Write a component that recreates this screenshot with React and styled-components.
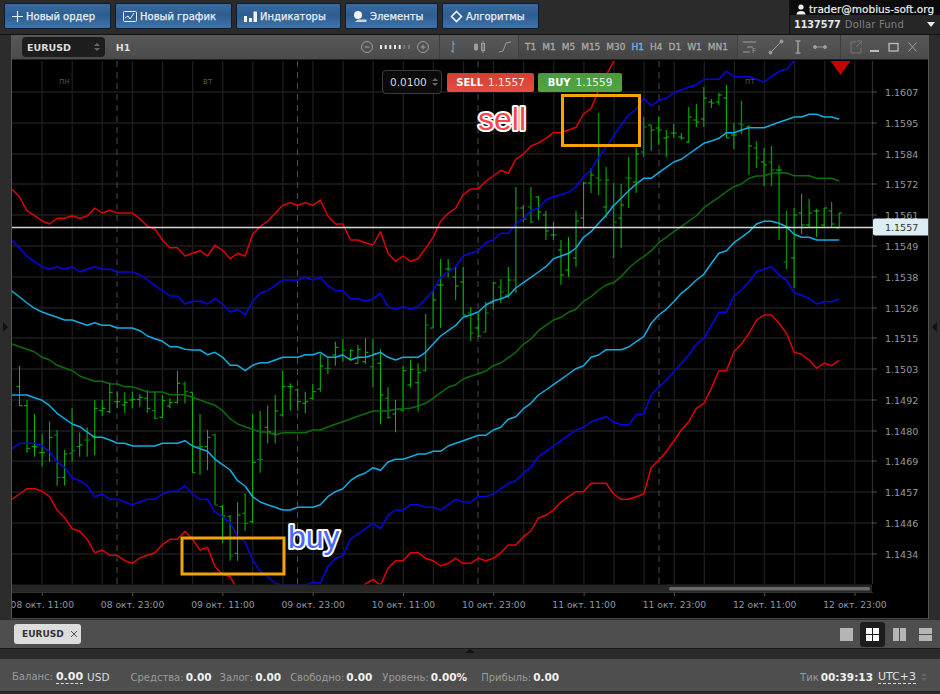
import React from 'react'
import styled, { createGlobalStyle } from 'styled-components'

const X = (k) => 12 + 7.52 * k

const LINES = {
  redTop: [189.3,197,210.7,215.7,221,224,218.3,218.3,215.7,218.3,216,208,213,210.3,213,213,213,218.7,226.3,229,240,247.7,247.7,256,253.3,250.7,256,245.3,250.3,258.7,253.3,256,234.3,226.7,221,213.3,205.3,202.7,205.3,202.7,205.3,200,216,224,224,240,240,242.7,245,231.7,253.3,261.3,256,261.3,258.7,248.3,237.3,221.3,213.3,208,194.7,189,189,181.3,176,170.3,173.3,159.3,154,146,143,138.3,132.7,132.7,130,127.3,114,108.7,90,75,61.7,48],
  blueTop: [240.3,248.3,256.3,261.7,266.7,269.3,266.7,269.3,266.7,272,269.3,266.7,269.3,269.3,272,272,272,274.7,280,285.3,290.7,296,296,304,301.3,301.3,304,298.7,304,312,309.3,314.7,301.3,293.3,290.7,285.3,280,280,280,277.3,280,277.3,285.7,290.7,290.7,298.7,298.7,301.3,298.7,293.3,306.7,309.3,306.7,309.3,306.7,298.7,290.7,277.3,272,266.7,256,253.3,250.7,242.7,240,233.3,233.3,224,218.7,210.7,208,200,196.7,194.7,192,186.7,176.7,170,157.3,147.3,136,125,115,109.3,98.3,106,100.7,98.3,92.7,90,87.3,84.7,79.3,79.3,79.3,71.3,76.7,76.7,76.7,79.3,82,76.7,71.3,69.3,61,50],
  cyanTop: [291,297,303,308.3,312,314.7,317.3,320,320,322.7,325.3,322.7,325.3,325.3,328,328,328,330.7,336,338.7,341.3,346.7,346.7,349.3,350,350,354.7,352.3,357.3,365.3,365.3,370.7,365.3,362.7,362.7,360,357.3,357.3,357.3,354.7,354.7,352.3,357.3,357.3,355,360,357.3,357.3,355,352.3,357.3,360,357.3,357.3,357.3,352.3,344,336,330.7,325.3,317.3,314.7,312,305,301,298.7,296,288,282.7,277.3,272,266.7,258.7,256,253.3,248,237.3,231.7,223.3,215.3,205.7,198.3,190.7,184,178.3,178.3,172.7,167.3,162,159.3,154,148.7,143.3,141,138.3,132.7,132.7,130,127.7,127.7,127.7,125,122.3,119.7,117,117,114.3,114.3,117,117,119.3],
  green: [344,346.7,349.3,352,357.3,360,365.3,368,370.7,376,378.7,381.3,381.3,384,384,386.7,386.7,389.3,392,392,392,394.7,394.7,394.7,397.3,400,402.7,405.3,410.7,418.7,424,426.7,429.3,432,432,435,432.7,432.7,432.7,432.7,430,430,427,424.3,421.7,419,416.3,413.7,411,411,411,409.3,408.7,408.3,406,403.3,398.3,392.7,387.3,384.7,379,376.3,373.7,371,365.7,363,357.7,352.3,344.3,339,330.7,325.3,320,317.3,312.3,309.3,301.3,296.7,290,285,282.7,276.7,268.3,261.7,256.7,250.7,242.7,237.3,231.7,226.7,221,216,207.7,202.3,197.3,191.7,186.7,184,178.3,176,175.7,173.3,172.7,173,175.7,175.7,175.7,178.3,178.3,178.3,181],
  cyanLow: [395,395,395,397.7,400.3,405.7,413.3,418.7,424,426.7,432,437.3,437.3,440,443.3,443.3,446,446,446,446,443.3,443.3,443.3,440.7,446,448.7,451.3,459.3,464.7,470,480.7,486,496.7,502,504.7,507.3,510,510,507.3,507.3,507.3,504.7,496.7,491.7,488.7,480.7,475.7,473,467.7,470.3,462,459.3,459.3,456.7,454,454,451.3,451.3,446,443.3,440.7,438,435.3,435.3,430,427.3,419.3,416.7,408.7,403.3,395,390,384.7,379.3,374,368.7,365.7,357.3,355,349.7,349.7,349.7,347,341.7,336.7,323.3,315,309.3,301.7,293.3,287.3,280,274.3,263.3,253.3,250.7,242.7,237.3,231.7,224,221.3,221.3,223.3,226.7,234.3,237.3,237.3,240,240,240,240],
  blueLow: [448.7,443.3,443.3,443.3,446,451.7,461.7,467.3,477.7,480.7,485.7,496.7,494,499.3,499.3,502,504.7,502,499.3,499.3,494,491.3,491.3,485.7,494,499.3,499.3,512,516.7,522.7,536.7,542,560,571.3,576.7,583.3,585,585,585,585,582.3,583.3,566.7,558.3,555.7,539.3,534,528.7,523.3,528.7,515.3,510,510,504.7,504.7,507.3,507.3,510,504.7,499.3,502,502,496.7,496.7,494,488.7,483.3,480.7,472.7,467.3,456.7,451.3,446,440.7,435.3,430,427.3,422,419.3,416.7,422,424.7,424.7,415,414,395,387.3,380,371.7,363.3,355,344,338.7,325.3,312.3,312.3,296,290,281.7,271.7,269,266.7,275,280,292.7,295.3,298.3,304,301.7,301.7,299],
  redLow: [499.3,494,488.7,488.7,491.3,496.7,510,517.7,528.7,531.3,539.3,552.7,550,555.3,555.3,560.7,563.3,558,555.3,552.7,544.7,539.3,539.3,531.3,539.3,550,547.3,566.7,574.3,576.7,590,600,600,600,600,600,600,600,600,600,600,600,600,600,600,600,590,584,579.3,585,568.3,560.7,560.7,552.7,552.7,558.3,560.7,566,563.3,558.3,563.3,563.3,558.3,560.7,558.3,552.7,545,545,536.7,531,518,515.3,510,502,496.7,491.7,491.7,483.3,483.3,483.3,494,499.3,499.3,496.7,494,467.7,460,451.7,441,430,421.7,408.3,403.3,388.3,370.7,370.7,351.7,344,333.3,320,315,315,323.3,333.3,352.3,354.3,360,368.3,363,365.7,360.3],
}

// k, high, low, open, close, dark
const BARS = [
  [1,366,405.7,386.7,405.7],[2,400,452.7,405.7,448.3],[3,414,456.7,446.7,446.7],[4,434.3,466.7,452.7,452.7],[5,421.7,461.7,450.7,437.3],
  [6,430,485.7,435,477.3,1],[7,450,485.7,477.3,454],[8,408.3,461.7,453.3,450.7,1],[9,432.7,456.7,446.7,445],[10,427.3,456.7,440,440,1],
  [11,400,455,437,408.3],[12,400,416,410.7,408.3],[13,382.3,413.3,411.7,392.3],[14,391.7,408.3,401.7,401.7],[15,392.3,413.3,405,402.3],
  [16,391.7,408.3,400,399.3],[17,394,406.7,399.3,397.3],[18,390,412.7,398.3,408.3],[19,391.7,419.3,410.7,418.3,1],[20,395,418.3,417.3,400.7],
  [21,398.3,408.3,406,402.7],[22,370.7,403.3,402.3,383.3],[23,381.7,403.3,384,391.7,1],[24,392.3,472.7,392.3,472.7],[25,414,475,446.7,446.7,1],
  [26,430,470,446.7,437.3],[27,434,505,435,505,1],[28,505,543.3,506.7,516],[29,515,560.7,516.7,556,1],[30,502.3,560.7,553.3,515],
  [31,493.3,530.7,513.3,523.3,1],[32,414,523.3,521.7,462.3],[33,411,472.7,459.3,459.3,1],[34,405.7,443.3,427.3,431.7],[35,395,443.3,433.3,411],
  [36,370.7,416.7,415,386.7],[37,383.3,410.7,386.7,386.7],[38,388.3,410.7,390,401.7],[39,391.7,413.3,403.3,401.7],[40,384,400,398.3,391.7],
  [41,354,391.7,389,366],[42,358.3,374,368.3,368.3,1],[43,341.7,365.7,355,347.3],[44,339,361.7,355,350,1],[45,349.3,360.7,358.3,350.7],
  [46,345,363.3,363.3,349.3],[47,338.3,364,361.7,352.3],[48,339,387.3,366.7,353.3,1],[49,349.3,424,363.3,395],[50,387.3,419,398.3,417.3,1],
  [51,400,432.3,414,409.3],[52,366,411.7,410,370.7],[53,360,387.3,385,369.3],[54,363.3,411.7,382.7,372.7],[55,314,371.7,370.7,325,1],
  [56,290,328,328,300],[57,259,328,285,285],[58,259,277,269,269],[59,267,300,277,286],[60,267,315,282,315],
  [61,307,341,313,333,1],[62,313,337,328,336],[63,302,332,332,313,1],[64,282,310,303,283],[65,279,303,287,292,1],
  [66,267,298,295,280],[67,187,293,280,208,1],[68,205,222,208,219],[69,187,223,207,222,1],[70,196,220,197,212],
  [71,211,240,215,231],[72,222,240,235,235],[73,240,285,250,275],[74,237,277,270,253],[75,211,267,258,221],
  [76,182,227,218,183],[77,168,193,183,175],[78,113,195,178,180,1],[79,167,218,207,180],[80,183,258,206,222,1],
  [81,184,248,218,205],[82,157,208,178,178,1],[83,148,193,182,154],[84,117,157,152,127,1],[85,125,151,125,130],
  [86,117,145,128,130],[87,130,157,138,137],[88,124,138,133,133],[89,133,140,137,138],[90,107,143,142,117],
  [91,104,127,120,122],[92,87,127,119,98],[93,99,108,102,103],[94,93,105,102,95],[95,85,138,98,138],
  [96,123,149,135,135],[97,101,134,124,125,1],[98,125,175,127,146],[99,141,168,148,158,1],[100,148,186,162,165],
  [101,146,186,162,170,1],[102,165,240,170,170],[103,211,269,262,227,1],[104,208,288,258,215],[105,194,234,213,225],
  [106,199,228,225,213],[107,209,237,211,211],[108,208,228,225,208],[109,202,227,211,224],[110,213,228,228,213],
]

const PRICES = [
  ['1.1607', 92], ['1.1595', 123], ['1.1584', 154], ['1.1572', 184], ['1.1561', 215], ['1.1549', 246],
  ['1.1538', 277], ['1.1526', 308], ['1.1515', 338], ['1.1503', 369], ['1.1492', 400], ['1.1480', 431],
  ['1.1469', 461], ['1.1457', 492], ['1.1446', 523], ['1.1434', 554],
]

const TIMES = [
  '08 окт. 11:00', '08 окт. 23:00', '09 окт. 11:00', '09 окт. 23:00', '10 окт. 11:00',
  '10 окт. 23:00', '11 окт. 11:00', '11 окт. 23:00', '12 окт. 11:00', '12 окт. 23:00',
]

const PERIODS = ['T1', 'M1', 'M5', 'M15', 'M30', 'H1', 'H4', 'D1', 'W1', 'MN1']

const GRID_X = Array.from({ length: 29 }, (_, i) => 12 + 30.1 * i).slice(1)
const DAY_X = [117, 297.5, 478, 659]

const toPoints = (ys) => ys.map((y, k) => `${X(k).toFixed(1)},${y}`).join(' ')

const GlobalStyle = createGlobalStyle`
  html, body {
    margin: 0;
    padding: 0;
    background: #2b2b2b;
  }
  body {
    font-family: "DejaVu Sans", sans-serif;
    font-size: 10px;
  }
`

const Page = styled.div`
  width: 940px;
  height: 694px;
  display: flex;
  flex-direction: column;
  overflow: hidden;
  background: #2b2b2b;
`

const TopBar = styled.div`
  height: 34px;
  display: flex;
  justify-content: space-between;
  border-bottom: 1px solid #111;
  background: #2b2b2b;
`

const ToolGroup = styled.div`
  display: flex;
  gap: 4px;
  padding: 3px 0 0 4px;
`

const ToolButton = styled.button`
  width: ${(p) => p.w}px;
  height: 26px;
  box-sizing: border-box;
  display: flex;
  align-items: center;
  gap: 3px;
  padding: 0 0 0 ${(p) => p.pad || 7}px;
  border: 1px solid #0d1d30;
  border-radius: 2px;
  background: linear-gradient(#3a6b9f, #2d5d91 45%, #3e72a8);
  color: #e8eef5;
  font-family: inherit;
  font-size: 10px;
  font-weight: 400;
  white-space: nowrap;
  -webkit-text-stroke: 0.25px #e8eef5;
`

const Account = styled.div`
  width: 150px;
  border-left: 1px solid #111;
  display: flex;
  flex-direction: column;
`

const AccountUser = styled.div`
  height: 15px;
  box-sizing: border-box;
  padding: 3px 0 0 6px;
  background: #0b0b0b;
  display: flex;
  align-items: center;
  gap: 3px;
  color: #eee;
  font-size: 10.5px;
  -webkit-text-stroke: 0.2px #eee;
  white-space: nowrap;
`

const AccountFund = styled.div`
  flex: 1;
  display: flex;
  align-items: center;
  padding: 0 5px 0 4px;
  background: #262626;
  color: #7f7f7f;
  font-size: 10px;
  letter-spacing: 0.2px;
  white-space: nowrap;
  b {
    color: #e6e6e6;
    margin-right: 4px;
    font-size: 9.6px;
    letter-spacing: 0;
  }
`

const FundArrow = styled.i`
  margin-left: auto;
  width: 0;
  height: 0;
  border-left: 4px solid transparent;
  border-right: 4px solid transparent;
  border-top: 5px solid #eee;
`

const Workspace = styled.div`
  height: 584px;
  display: flex;
`

const SideStrip = styled.div`
  width: 11px;
  flex: none;
  display: flex;
  align-items: center;
  justify-content: center;
  background: #2c2c2c;
  border-left: ${(p) => (p.right ? '1px solid #555' : 'none')};
  border-right: ${(p) => (p.right ? 'none' : '1px solid #555')};
`

const SideArrow = styled.i`
  width: 0;
  height: 0;
  border-top: 5px solid transparent;
  border-bottom: 5px solid transparent;
  border-left: ${(p) => (p.left ? 'none' : '5px solid #111')};
  border-right: ${(p) => (p.left ? '5px solid #111' : 'none')};
`

const ChartWindow = styled.div`
  width: 916px;
  flex: none;
  display: flex;
  flex-direction: column;
`

const ChartHeader = styled.div`
  height: 25px;
  flex: none;
  display: flex;
  align-items: center;
  background: linear-gradient(#585858, #4b4b4b);
  color: #b5b5b5;
  border-bottom: 1px solid #222;
  box-sizing: border-box;
`

const SymbolSelect = styled.div`
  width: 83px;
  height: 20px;
  margin-left: 10px;
  box-sizing: border-box;
  display: flex;
  align-items: center;
  justify-content: space-between;
  padding: 0 5px;
  background: #1d1d1d;
  border-radius: 4px;
  color: #ddd;
  font-size: 9.5px;
  font-weight: 700;
`

const Spinner = styled.span`
  display: flex;
  flex-direction: column;
  gap: 2px;
  margin-left: ${(p) => p.left || 0}px;
  i {
    width: 0;
    height: 0;
    border-left: 3px solid transparent;
    border-right: 3px solid transparent;
  }
  i:first-child {
    border-bottom: 3px solid #666;
  }
  i:last-child {
    border-top: 3px solid #666;
  }
`

const Interval = styled.b`
  width: 245px;
  margin-left: 11px;
  color: #ddd;
  font-size: 9.5px;
`

const HeaderGroup = styled.div`
  height: 100%;
  display: flex;
  align-items: center;
  gap: ${(p) => p.gap || 0}px;
  box-sizing: border-box;
  width: ${(p) => p.w}px;
  padding-left: ${(p) => p.pad || 0}px;
  border-right: ${(p) => (p.last ? 'none' : '1px solid #3f3f3f')};
  background: ${(p) => (p.shade ? 'rgba(0,0,0,0.08)' : 'transparent')};
`

const Period = styled.span`
  color: ${(p) => (p.active ? '#72b4ea' : '#a8a8a8')};
  font-size: 9px;
  -webkit-text-stroke: 0.3px ${(p) => (p.active ? '#72b4ea' : '#a8a8a8')};
`

const ChartBody = styled.div`
  position: relative;
  height: 559px;
  background: #000;
`

const ChartSvg = styled.svg`
  display: block;
  width: 916px;
  height: 559px;
  text {
    font-family: "DejaVu Sans", sans-serif;
  }
`

const Note = styled.text`
  && {
    font-family: "Liberation Sans", sans-serif;
  }
  font-size: 32px;
  fill: ${(p) => p.color};
  stroke: #fff;
  stroke-width: 4px;
  stroke-linejoin: round;
  paint-order: stroke;
`

const OrderTicket = styled.div`
  position: absolute;
  left: 370px;
  top: 10px;
  display: flex;
  align-items: center;
  gap: 5px;
`

const LotBox = styled.div`
  width: 60px;
  height: 24px;
  box-sizing: border-box;
  display: flex;
  align-items: center;
  justify-content: space-between;
  padding: 0 3px 0 7px;
  border: 1px solid #3c3c3c;
  border-radius: 4px;
  background: #0a0a0a;
  color: #d8d8d8;
  font-size: 10.5px;
`

const TradeButton = styled.div`
  width: ${(p) => p.w}px;
  height: 19px;
  display: flex;
  align-items: center;
  justify-content: center;
  gap: 5px;
  border-radius: 2px;
  background: ${(p) => (p.buy ? 'linear-gradient(#4a9a3c, #55a443)' : 'linear-gradient(#d63d30, #e25041)')};
  color: #f2f2f2;
  font-size: 10.5px;
  margin-left: ${(p) => (p.buy ? '-1px' : '0')};
  b {
    color: #fff;
    font-size: 10px;
  }
`

const TabBar = styled.div`
  height: 30px;
  box-sizing: border-box;
  display: flex;
  align-items: center;
  justify-content: space-between;
  padding: 0 2px 0 14px;
  background: #4e4e4e;
  border-top: 1px solid #2a2a2a;
  border-bottom: 1px solid #1a1a1a;
`

const ChartTab = styled.div`
  width: 67px;
  height: 20px;
  box-sizing: border-box;
  display: flex;
  align-items: center;
  gap: 6px;
  padding-left: 8px;
  border-radius: 3px;
  background: #dcdcdc;
  color: #333;
  font-size: 9px;
  font-weight: 700;
`

const LayoutGroup = styled.div`
  display: flex;
  align-items: center;
  gap: 1.5px;
`

const LayoutButton = styled.div`
  width: 25px;
  height: 25px;
  display: flex;
  align-items: center;
  justify-content: center;
  border-radius: 3px;
  background: ${(p) => (p.active ? '#1d1d1d' : 'transparent')};
`

const Handle = styled.div`
  height: 10px;
  background: #2b2b2b;
  position: relative;
  &::after {
    content: '';
    position: absolute;
    left: 465px;
    top: 0;
    border-left: 5px solid transparent;
    border-right: 5px solid transparent;
    border-bottom: 4px solid #111;
  }
`

const StatusBar = styled.div`
  height: 33px;
  box-sizing: border-box;
  display: flex;
  align-items: center;
  padding: 3px 13px 0 12px;
  background: #4e4e4e;
  border-bottom: 1px solid #222;
  color: #9b9b9b;
  font-size: 10px;
  white-space: nowrap;
`

const Stat = styled.span`
  margin-right: ${(p) => p.gap}px;
  margin-left: ${(p) => (p.pushed ? 'auto' : '0')};
  b {
    margin-left: 2px;
    color: #f0f0f0;
    font-size: 10.5px;
  }
`

const DashedValue = styled.b`
  color: #f0f0f0;
  font-size: 11px;
  border-bottom: 1px dashed #ddd;
`

const TimeZone = styled.span`
  color: #e0e0e0;
  font-size: 11px;
  border-bottom: 1px dashed #ddd;
`

const Unit = styled.span`
  color: #dadada;
  font-size: 10.5px;
  margin: 0 21px 0 4px;
`

const PlusIcon = () => (
  <svg width="11" height="11" viewBox="0 0 11 11"><path d="M5.500 0v11M0 5.500h11" stroke="#f0f4f8" strokeWidth="1.2" /></svg>
)

const GraphIcon = () => (
  <svg width="14" height="13" viewBox="0 0 14 13" fill="none" stroke="#e8eef5">
    <rect x="0.5" y="1.5" width="13" height="10" rx="1" />
    <path d="M2 8l3-2 2 3 4-6" />
  </svg>
)

const BarsIcon = () => (
  <svg width="13" height="12" viewBox="0 0 13 12" fill="#f0f4f8"><path d="M0 6h3v6H0zM5 8h3v4H5zM9.5 1.500h3.500v10.500H9.500z" /></svg>
)

const ShapesIcon = () => (
  <svg width="14" height="13" viewBox="0 0 14 13" fill="#f0f4f8">
    <circle cx="5" cy="5" r="4" />
    <path d="M5 9.500h8.500v2.500H2z" fill="#c8d4e0" />
  </svg>
)

const DiamondIcon = () => (
  <svg width="13" height="13" viewBox="0 0 13 13" fill="none" stroke="#f0f4f8" strokeWidth="1.600"><path d="M6.500 1.500l5 5-5 5-5-5z" /></svg>
)

const UserIcon = () => (
  <svg width="10" height="11" viewBox="0 0 10 11" fill="#f2f2f2">
    <circle cx="5" cy="3" r="2.600" />
    <path d="M0.500 10.500c0-2.500 2-3.500 4.500-3.500s4.500 1 4.500 3.500z" />
  </svg>
)

const HeadIcon = ({ w = 16, children }) => (
  <svg width={w} height="16" viewBox={`0 0 ${w} 16`} fill="none" stroke="#9c9c9c" strokeWidth="1">{children}</svg>
)

const ChartDrawing = () => (
  <ChartSvg viewBox="12 60 916 559">
    <defs>
      <clipPath id="plot"><rect x="12" y="61" width="860" height="523.500" /></clipPath>
    </defs>

    <g stroke="#1e1e1e" strokeWidth="1.3">
      {GRID_X.map((x) => <line key={x} x1={x} x2={x} y1="61" y2="584" />)}
      {PRICES.map(([p, y]) => <line key={p} x1="12" x2="872" y1={y} y2={y} />)}
      <line x1="872.500" x2="872.500" y1="61" y2="584" stroke="#2e2e2e" />
    </g>
    <g stroke="#4a4a4a" strokeDasharray="6 5">
      {DAY_X.map((x) => <line key={x} x1={x} x2={x} y1="61" y2="584" />)}
    </g>

    <g fill="#555" fontSize="8">
      <text x="59" y="84">пн</text>
      <text x="203" y="84">вт</text>
      <text x="745" y="84">пт</text>
    </g>

    <g clipPath="url(#plot)">
      {BARS.map(([k, hi, lo, o, c, dark]) => {
        const x = X(k)
        return (
          <g key={k} stroke={dark ? '#0b8a0b' : '#06c206'} strokeWidth={dark ? 1.4 : 1}>
            <line x1={x} x2={x} y1={hi} y2={lo} />
            <line x1={x - 3} x2={x} y1={o} y2={o} strokeWidth="1" />
            <line x1={x} x2={x + 3} y1={c} y2={c} strokeWidth="1" />
          </g>
        )
      })}
      <g fill="none" strokeWidth="1.500" strokeLinejoin="round">
        <polyline points={toPoints(LINES.redTop)} stroke="#e00000" />
        <polyline points={toPoints(LINES.blueTop)} stroke="#0505e8" />
        <polyline points={toPoints(LINES.cyanTop)} stroke="#12ade2" />
        <polyline points={toPoints(LINES.green)} stroke="#0b6e0b" />
        <polyline points={toPoints(LINES.cyanLow)} stroke="#12ade2" />
        <polyline points={toPoints(LINES.blueLow)} stroke="#0505e8" />
        <polyline points={toPoints(LINES.redLow)} stroke="#e00000" />
      </g>
    </g>

    <line x1="12" x2="873" y1="227.500" y2="227.500" stroke="#d8d8d8" strokeWidth="1.500" />

    <polygon points="830.500,61 850.500,61 840.500,75" fill="#c40000" />

    <g fill="none" stroke="#f2a400" strokeWidth="3">
      <rect x="182" y="538" width="102" height="36" />
      <rect x="562.500" y="95.500" width="77" height="50" />
    </g>

    <Note x="478" y="130" color="#ff4450">sell</Note>
    <Note x="288" y="548" color="#4a68ff">buy</Note>

    <g>
      {PRICES.map(([p, y]) => (
        <g key={p}>
          <line x1="872" x2="877" y1={y} y2={y} stroke="#555" />
          <text x="885" y={y + 4} fontSize="9.500" fill="#9a9a9a">{p}</text>
        </g>
      ))}
      <rect x="873" y="218.500" width="56" height="17" rx="2" fill="#dcedf4" />
      <text x="885" y="231" fontSize="9.500" fill="#333">1.1557</text>
    </g>

    <rect x="12" y="584.500" width="860" height="8" fill="#262626" />
    <rect x="669" y="587" width="201" height="3.500" rx="1.500" fill="#6a6a6a" />
    <line x1="12" x2="873" y1="592.500" y2="592.500" stroke="#333" />

    {TIMES.map((t, i) => {
      const x = 42.3 + 90.3 * i
      return (
        <g key={t}>
          <line x1={x} x2={x} y1="593" y2="596" stroke="#555" />
          <text x={x} y="608" fontSize="9.200" textAnchor="middle" fill="#8d99a3">{t}</text>
        </g>
      )
    })}
    <line x1="12" x2="928" y1="618.500" y2="618.500" stroke="#444" />
  </ChartSvg>
)

const App = () => (
  <Page>
    <GlobalStyle />
    <TopBar>
      <ToolGroup>
        <ToolButton w={107}><PlusIcon />Новый ордер</ToolButton>
        <ToolButton w={117}><GraphIcon />Новый график</ToolButton>
        <ToolButton w={105}><BarsIcon />Индикаторы</ToolButton>
        <ToolButton w={93}><ShapesIcon />Элементы</ToolButton>
        <ToolButton w={97}><DiamondIcon />Алгоритмы</ToolButton>
      </ToolGroup>
      <Account>
        <AccountUser><UserIcon />trader@mobius-soft.org</AccountUser>
        <AccountFund><b>1137577</b>Dollar Fund<FundArrow /></AccountFund>
      </Account>
    </TopBar>

    <Workspace>
      <SideStrip><SideArrow /></SideStrip>
      <ChartWindow>
        <ChartHeader>
          <SymbolSelect>EURUSD<Spinner><i /><i /></Spinner></SymbolSelect>
          <Interval>H1</Interval>
          <HeaderGroup w={80} gap={6}>
            <HeadIcon w={14}><circle cx="7" cy="8" r="5.500" /><path d="M4.500 8h5" /></HeadIcon>
            <svg width="30" height="6" viewBox="0 0 30 6" fill="#e8e8e8">
              <path d="M0 1h2v4H0zM4.700 1h2v4h-2zM9.300 1h2v4h-2zM14 1h2v4h-2zM18.700 1h2v4h-2z" />
              <path d="M23.300 1h2v4h-2zM28 1h2v4h-2z" fill="#777" />
            </svg>
            <HeadIcon w={14}><circle cx="7" cy="8" r="5.500" /><path d="M4.500 8h5M7 5.500v5" /></HeadIcon>
          </HeaderGroup>
          <HeaderGroup w={79} pad={6} gap={12}>
            <HeadIcon w={14}><path d="M7 2v12M5 12h2M7 5h2" stroke="#6fa8dc" /></HeadIcon>
            <HeadIcon w={14}><path d="M4 4v8M11 2v12" /><rect x="2.500" y="5.500" width="3" height="5" fill="#9c9c9c" /><rect x="9.500" y="4.500" width="3" height="7" /></HeadIcon>
            <HeadIcon w={14}><path d="M1 13l4-1 3-8 5-1" /></HeadIcon>
          </HeaderGroup>
          <HeaderGroup w={220} pad={6} gap={6} shade>
            {PERIODS.map((p) => <Period key={p} active={p === 'H1'}>{p}</Period>)}
          </HeaderGroup>
          <HeaderGroup w={103} pad={4} gap={9.5}>
            <HeadIcon w={16}><path d="M1 3h13M5 8h6M1 13h7" /><text x="10" y="14" fontSize="7" fill="#9c9c9c" stroke="none">F</text></HeadIcon>
            <HeadIcon w={16}><path d="M2 14L14 2" /><circle cx="2.500" cy="13.500" r="1.500" fill="#9c9c9c" /><circle cx="13.500" cy="2.500" r="1.500" fill="#9c9c9c" /></HeadIcon>
            <HeadIcon w={10}><path d="M5 2v12" strokeWidth="1.600" /><path d="M2.500 2h5M2.500 14h5" strokeWidth="1.600" /></HeadIcon>
            <HeadIcon w={14}><path d="M1 8h12" /><circle cx="2" cy="8" r="1.500" fill="#9c9c9c" /><circle cx="12" cy="8" r="1.500" fill="#9c9c9c" /></HeadIcon>
          </HeaderGroup>
          <HeaderGroup w={87} pad={8} gap={6} last>
            <HeadIcon w={13}><path d="M7 3H2v11h10V9M8 2h5v5M13 2L7 8" stroke="#777" /></HeadIcon>
            <HeadIcon w={13}><path d="M2 12h9" strokeWidth="2" stroke="#bbb" /></HeadIcon>
            <HeadIcon w={13}><rect x="2" y="4.500" width="9" height="7.500" stroke="#bbb" strokeWidth="1.300" /></HeadIcon>
            <HeadIcon w={13}><path d="M2.500 3.500l8 9M10.500 3.500l-8 9" /></HeadIcon>
          </HeaderGroup>
        </ChartHeader>
        <ChartBody>
          <ChartDrawing />
          <OrderTicket>
            <LotBox>0.0100<Spinner><i /><i /></Spinner></LotBox>
            <TradeButton w={87}><b>SELL</b>1.1557</TradeButton>
            <TradeButton w={84} buy><b>BUY</b>1.1559</TradeButton>
          </OrderTicket>
        </ChartBody>
      </ChartWindow>
      <SideStrip right><SideArrow left /></SideStrip>
    </Workspace>

    <TabBar>
      <ChartTab>
        EURUSD
        <svg width="8" height="8" viewBox="0 0 8 8" stroke="#555"><path d="M1 1l6 6M7 1L1 7" /></svg>
      </ChartTab>
      <LayoutGroup>
        <LayoutButton><svg width="13" height="13"><rect width="13" height="13" fill="#b5b5b5" /></svg></LayoutButton>
        <LayoutButton active>
          <svg width="13" height="13" fill="#fff"><path d="M0 0h6v6H0zM7 0h6v6H7zM0 7h6v6H0zM7 7h6v6H7z" /></svg>
        </LayoutButton>
        <LayoutButton><svg width="13" height="13" fill="#b5b5b5"><path d="M0 0h6v13H0zM7 0h6v13H7z" /></svg></LayoutButton>
        <LayoutButton><svg width="13" height="13" fill="#b5b5b5"><path d="M0 0h13v6H0zM0 7h13v6H0z" /></svg></LayoutButton>
      </LayoutGroup>
    </TabBar>

    <Handle />

    <StatusBar>
      <Stat gap={3}>Баланс:</Stat>
      <DashedValue>0.00</DashedValue>
      <Unit>USD</Unit>
      <Stat gap={8}>Средства:<b>0.00</b></Stat>
      <Stat gap={9}>Залог:<b>0.00</b></Stat>
      <Stat gap={10}>Свободно:<b>0.00</b></Stat>
      <Stat gap={14}>Уровень:<b>0.00%</b></Stat>
      <Stat gap={0}>Прибыль:<b>0.00</b></Stat>
      <Stat gap={5} pushed>Тик<b>00:39:13</b></Stat>
      <TimeZone>UTC+3</TimeZone>
      <Spinner left={5}><i /><i /></Spinner>
    </StatusBar>
  </Page>
)

export default App
